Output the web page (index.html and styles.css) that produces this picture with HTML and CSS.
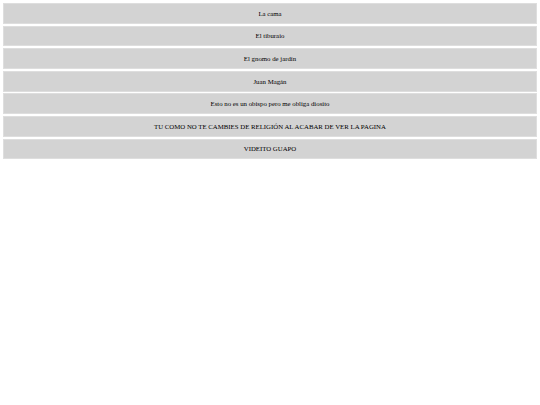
FILE: index.html
```html
<!DOCTYPE html>
<html>
<head>
<meta charset="utf-8">
<link rel="stylesheet" href="styles.css">
</head>
<body>
<div class="list">
  <div class="item">La cama</div>
  <div class="item">El tiburaio</div>
  <div class="item">El gnomo de jardín</div>
  <div class="item">Juan Magán</div>
  <div class="item">Esto no es un obispo pero me obliga diosito</div>
  <div class="item">TU COMO NO TE CAMBIES DE RELIGIÓN AL ACABAR DE VER LA PAGINA</div>
  <div class="item">VIDEITO GUAPO</div>
</div>
</body>
</html>
```
FILE: styles.css
```css
html, body {
  margin: 0;
  padding: 0;
  background: #ffffff;
}
.list {
  display: flex;
  flex-direction: column;
  gap: 1.8px;
  padding: 3px;
}
.item {
  box-sizing: border-box;
  height: 20.8px;
  display: flex;
  align-items: center;
  justify-content: center;
  background: #d3d3d3;
  border: 1px solid #dedede;
  color: #000;
  font-family: "Liberation Serif", serif;
  font-size: 6.8px;
}
```
